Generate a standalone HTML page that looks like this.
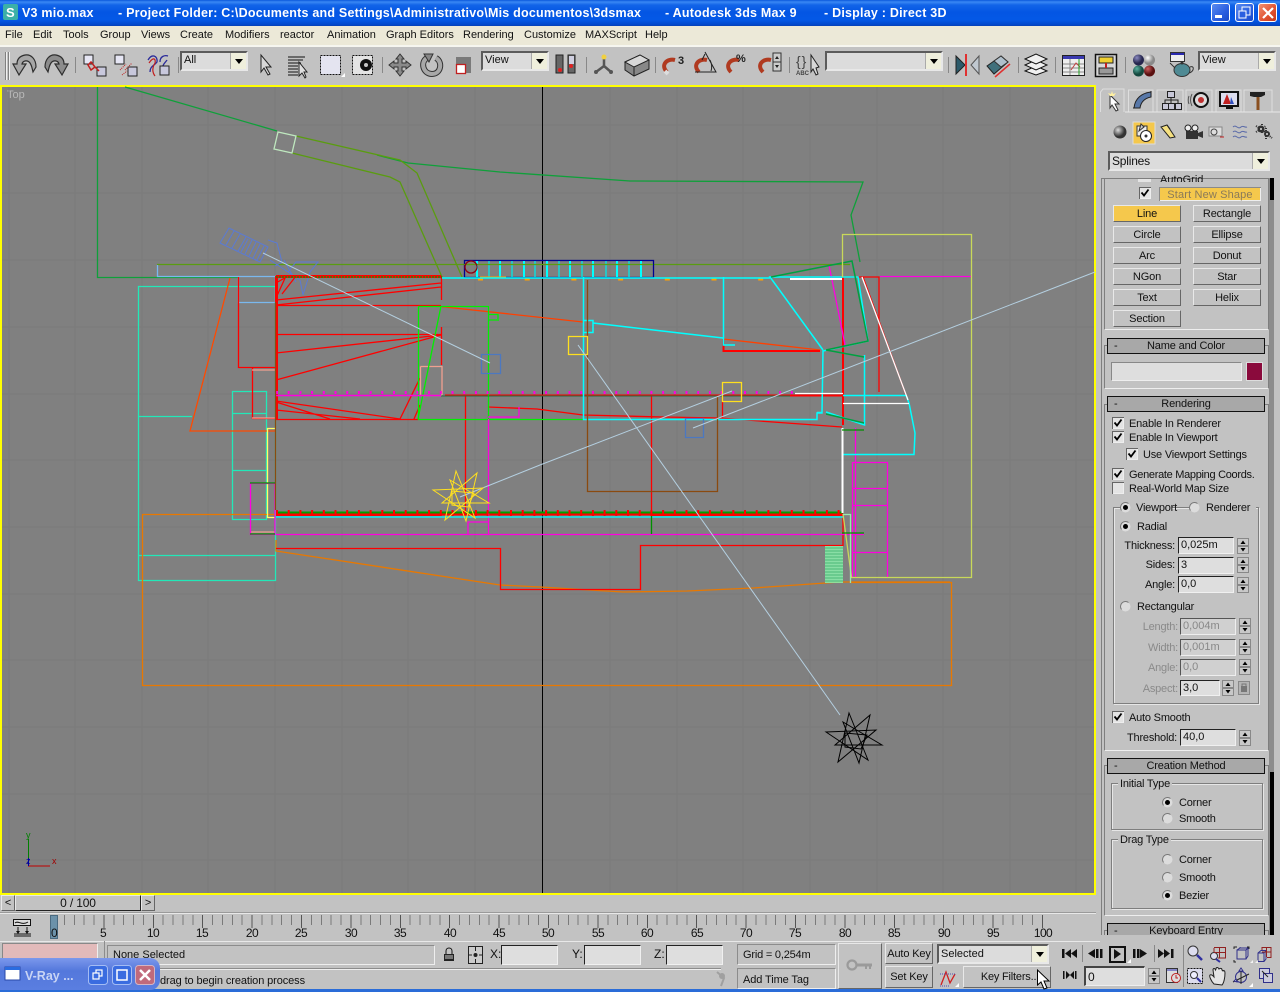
<!DOCTYPE html>
<html><head><meta charset="utf-8"><title>3ds Max</title>
<style>
html,body{margin:0;padding:0;width:1280px;height:992px;overflow:hidden;background:#c2c2c2}
body{position:relative;font:11px "Liberation Sans",sans-serif;color:#111}
.a{position:absolute}
.t{position:absolute;white-space:nowrap;line-height:13px;height:13px}
.r{position:absolute;white-space:nowrap;line-height:13px;text-align:right}
.c{position:absolute;white-space:nowrap;line-height:13px;text-align:center}
.p{margin-top:1px;letter-spacing:-.2px}
.d{color:#8a8a8a}
.tb{font-weight:bold;font-size:12.5px;color:#fff;letter-spacing:.22px;top:7px}
.b{position:absolute;box-sizing:border-box;background:#c2c2c2;border:1px solid;border-color:#e8e8e8 #666 #666 #e8e8e8;text-align:center;line-height:17px;white-space:nowrap;letter-spacing:-.15px}
.in{position:absolute;box-sizing:border-box;background:#dedede;border:1px solid;border-color:#222 #f0f0f0 #f0f0f0 #222;padding-left:2px;line-height:14px;white-space:nowrap}
.in.x{border-color:#555 #eee #eee #555;color:#888;background:#d0d0d0}
.box{position:absolute;box-sizing:border-box;border:1px solid;border-color:#8c8c8c #eee #eee #8c8c8c;white-space:nowrap}
.dd{position:absolute;box-sizing:border-box;background:#dcdcdc;border:2px solid;border-color:#5c5c5c #e8e8e8 #e8e8e8 #5c5c5c;white-space:nowrap;padding-left:2px;line-height:17px}
.dd:after{content:"";position:absolute;right:0;top:0;bottom:0;width:15px;background:#efefdc;border-left:1px solid #aaa}
.dd:before{content:"";position:absolute;right:3px;top:6px;z-index:2;border:4px solid transparent;border-top:5px solid #000;border-bottom:0}
.hd{position:absolute;box-sizing:border-box;left:1107px;width:158px;height:16px;background:#a8a8a8;border:1px solid #111;text-align:center;line-height:15px;white-space:nowrap;letter-spacing:-.15px}
.hd i{position:absolute;left:6px;top:0;font-style:normal}
.fr{position:absolute;box-sizing:border-box;border:1px solid #7e7e7e;box-shadow:1px 1px 0 #e6e6e6,inset 1px 1px 0 #e6e6e6}
.leg{position:absolute;background:#c2c2c2;padding:0 2px;line-height:13px;white-space:nowrap;margin-top:1px;letter-spacing:-.2px}
.y{background:#f5c84c}
.win{position:absolute;top:3px;width:19px;height:19px;box-sizing:border-box;border:1px solid #fff;border-radius:3px;background:linear-gradient(135deg,#5a8cf0,#2a5ee0 60%,#1a48c8)}
.lb{position:absolute;white-space:nowrap;line-height:13px;text-align:center;font-size:12px;width:20px;top:927px;letter-spacing:-.6px}
</style></head><body>

<!-- Title bar -->
<div class="a" style="left:0;top:0;width:1280px;height:26px;background:linear-gradient(#0a58dc 0,#3a88f4 2px,#1264e8 5px,#0456e4 12px,#0458e6 20px,#0346c8 25px,#0a40b0 26px)"></div>
<div class="t tb" style="left:22px">V3 mio.max</div>
<div class="t tb" style="left:118px">- Project Folder: C:\Documents and Settings\Administrativo\Mis documentos\3dsmax</div>
<div class="t tb" style="left:665px">- Autodesk 3ds Max 9</div>
<div class="t tb" style="left:824px">- Display : Direct 3D</div>
<div class="win" style="left:1211px"></div><div class="win" style="left:1235px"></div>
<div class="win" style="left:1258px;background:linear-gradient(135deg,#f09070,#e05030 60%,#c83818)"></div>

<!-- Menu -->
<div class="a" style="left:0;top:26px;width:1280px;height:19px;background:#ece9d8"></div>
<div class="a" style="left:0;top:45px;width:1280px;height:2px;background:#f6f6f0"></div>
<div class="t" style="left:5px;top:29px">File</div><div class="t" style="left:33px;top:29px">Edit</div><div class="t" style="left:63px;top:29px">Tools</div><div class="t" style="left:100px;top:29px">Group</div><div class="t" style="left:141px;top:29px">Views</div><div class="t" style="left:180px;top:29px">Create</div><div class="t" style="left:225px;top:29px">Modifiers</div><div class="t" style="left:280px;top:29px">reactor</div><div class="t" style="left:327px;top:29px">Animation</div><div class="t" style="left:386px;top:29px">Graph Editors</div><div class="t" style="left:463px;top:29px">Rendering</div><div class="t" style="left:524px;top:29px">Customize</div><div class="t" style="left:585px;top:29px">MAXScript</div><div class="t" style="left:645px;top:29px">Help</div>

<!-- Toolbar dropdowns -->
<div class="dd" style="left:180px;top:51px;width:68px;height:20px;line-height:15px">All</div>
<div class="dd" style="left:481px;top:51px;width:68px;height:20px;line-height:15px">View</div>
<div class="dd" style="left:825px;top:51px;width:118px;height:20px"></div>
<div class="dd" style="left:1198px;top:51px;width:78px;height:20px;line-height:15px">View</div>

<!-- Viewport -->
<div class="a" style="left:0;top:85px;width:1096px;height:810px;box-sizing:border-box;border:2px solid #ffff00;background:#808080"></div>
<div class="t" style="left:7px;top:89px;color:#b8b8b8">Top</div>

<svg class="a" style="left:0;top:0" width="1280" height="992" viewBox="0 0 1280 992" fill="none">
<defs>
<g id="star"><path d="M-27-5L23-7-15 25-4-24 15 23ZM17-22L6 26-10-15 29 8-18 8Z"/><path d="M-8-4L14-2 8 12-8 10Z"/></g>
</defs>
<!-- grid -->
<path shape-rendering="crispEdges" stroke="#7a7a7a" d="M9 87V893M75 87V893M142 87V893M208 87V893M275 87V893M342 87V893M408 87V893M475 87V893M610 87V893M677 87V893M743 87V893M810 87V893M877 87V893M943 87V893M1010 87V893M1076 87V893M2 125H1094M2 193H1094M2 260H1094M2 327H1094M2 394H1094M2 460H1094M2 527H1094M2 594H1094M2 660H1094M2 727H1094M2 794H1094M2 860H1094"/>
<g stroke-width="1.300">
<path stroke="#000" stroke-width="1" shape-rendering="crispEdges" d="M542.5 87V893"/>
<!-- green outlines -->
<path stroke="#0fa03a" d="M97.500 87V277.500H238M125 87L277 131M377 155L408 163 500 172 630 181 863 182 851 215 860 262"/>
<path stroke="#5a9c10" d="M296 136L400 160 417 173 462 277M292 153L390 177 400 182 442 277M157 264.500H470M653 264.500H850"/>
<path stroke="#bfe8bf" d="M278 132L296 136 292 153 274 149Z"/>
<!-- left turquoise -->
<path stroke="#22e8b8" d="M138.500 286.500H275.500V580.500H138.500ZM138 416.500H192M138 555.500H275M232.500 391.500H266.500V519.500H232.500ZM232 413.500H266M232 470.500H266"/>
<path stroke="#7ab8ee" d="M157.500 265V276.500H275.500M238.500 276.500V302.500H275.500V276"/>
<path stroke="#ff4a00" d="M230 278L190 431H275"/>
<path stroke="#e87800" d="M275 514.500H142.500V685.500H951.500V582.500H850M276 540V551L500 585 540 587 623 592 687 591 753 588 840 582 950 582"/>
<!-- blue object -->
<path stroke="#5a7ad4" stroke-width="1" d="M229 228L220 243 260 262 268 247ZM234 231L226 245M240 234L232 248M246 237L238 251M248 239L241 252M252 240L245 254M256 242L249 256M260 244L253 258M264 246L257 260M268 240L277 243 282 262 275 266M270 260L300 280 303 295 310 272 318 262 296 262 288 272M284 260L296 282"/>
<!-- red main -->
<g stroke="#ff0000">
<path stroke-width="3" d="M276 276.500H441M276.500 276V419"/>
<path d="M238.500 277V367.500H275M252.500 367.500V418.500H276M276.500 305.500H441M276.500 334.500H441M276 353L441 335M276 380L441 335M441.500 276V300M441.500 327V365M276 300L441 283M276 305L441 287M276 298L286 276M282 294L296 276M276 401L400 419M276 410L360 419M276 402L330 419M276 419.500H418M400 419L420 378M414 419L420 405M276 283L288 276"/>
<path d="M442 307L445 307 583 322M723 339L820 350" stroke="#ff4000"/>
<path stroke-width="2" d="M723.500 339V351H820M445 395.500H843M276 514.500H843M843 277V425"/>
<path d="M276 548.500H500.500V589.500H640.500V545.500H843V514M465.500 396V514M651.500 396V514M722.500 396V419M488 407L537 409 583 415 663 417 720 418 773 422 842 427M842.500 277H879V392M863 277L906 395"/>
</g>
<!-- pink etc -->
<path stroke="#f0a090" d="M420.500 366.500H442V395M420.500 366.500V395.500H442M252 370H275M252 418H275M250 532H275"/>
<path stroke="#ffff66" d="M275 428.500H267.500V517.500H275"/>
<path stroke="#00f000" d="M418.500 306.500H488.500V419M418.500 306.500V419.500H583M441 306L418 419M488.500 314.500H498V321M488 320H497"/>
<!-- magenta -->
<g stroke="#ff00e0">
<path d="M488.500 419V534M276 534.500H864M468 534V522H488M250.500 483.500H275V534.500H250.500ZM488 417H519V407M880 276.500H971M852.500 462.500H887.500V577M855.500 428V577M852 488.500H887M852 505.500H887M852 552.500H887M852.500 462V577M829 265L845 345"/>
<path stroke-width="1.500" d="M276 395.500H441"/>
<path stroke-width="3" stroke-dasharray="2 9.700" d="M276 392.500H800"/>
</g>
<!-- band y514 -->
<path stroke="#00a000" stroke-width="2" d="M276 512.500H843"/>
<path stroke="#ff0000" stroke-width="6" stroke-dasharray="2 9.700" d="M276 513H843"/>
<path stroke="#00ffff" d="M276 517H843"/>
<path stroke="#ff0000" stroke-width="2" d="M276 515H440M651 515H843"/>
<path stroke="#009000" d="M651.500 516V534M250 483H275M250 534H275"/>
<path stroke="#2a6a40" stroke-width="1" d="M441 396H790"/>
<!-- blue strip -->
<path stroke="#ffa000" stroke-width="2" stroke-dasharray="5 41.700" d="M478 279.500H780"/>
<rect x="464.500" y="260.500" width="189" height="17" stroke="#000090"/>
<path stroke="#00ffff" stroke-width="2" d="M477 261V277M500 261V277M524 261V277M547 261V277M570 261V277M593 261V277M617 261V277M641 261V277"/>
<path stroke="#00e8e8" d="M489 261V277M512 261V277M535 261V277M559 261V277M582 261V277M606 261V277M629 261V277"/>
<path stroke="#5a9c10" d="M464 264.500H653"/>
<path stroke="#ffa000" stroke-width="2" d="M480 277.500H506"/>
<path stroke="#00a000" stroke-dasharray="2 1" d="M276 277H442"/>
<path stroke="#00ffff" stroke-width="1.500" d="M442 278H770M583.500 277V419.500H817V413H822L823 351 868 341 858 277 770 277 823 350M723.500 277V345H735M583 320.500H593V332.500H583M593 323L723 338M864.500 355V425L826 412M817 412.500H822M843 395.500H906M909 403L915 433 914 454.500H843M906 395L909 403"/>
<path stroke="#00a040" stroke-width="1.500" d="M771 277L852 261 868 341 826 350 864 357M826 414L864 423"/>
<path stroke="#ffffff" stroke-width="2" d="M842.500 428V513M842 279H790"/>
<path stroke="#ffffff" d="M862 277L908 400M843 403.500H909M795 393.500H843"/>
<!-- yellow rect -->
<path stroke="#c8d85a" d="M842.500 277V234.500H971.500V577.500H851.500L843 514"/>
<path stroke="#9ae8b0" d="M843 514.500H850.500V583"/>
<path stroke="#009000" d="M842 533H864M842 430H864"/>
<!-- brown -->
<path stroke="#8a4a10" d="M587.500 280V491.500H717.500V396M275.500 302V510"/>
<!-- stair -->
<rect x="825" y="546" width="18" height="37" fill="#8ae8a8" opacity=".9"/>
<path stroke="#4ab878" stroke-width="1" d="M825 548H843M825 551H843M825 554H843M825 557H843M825 560H843M825 563H843M825 566H843M825 569H843M825 572H843M825 575H843M825 578H843M825 581H843"/>
<!-- squares -->
<path stroke="#ffe01e" d="M568.500 336.500H587.500V354.500H568.500ZM722.500 382.500H741.500V401.500H722.500Z"/>
<path stroke="#4c78c0" d="M481.500 354.500H500.500V373.500H481.500ZM685.500 418.500H703.500V437.500H685.500Z"/>
<circle cx="471" cy="267" r="6" stroke="#900010"/>
</g>
<!-- light lines -->
<g stroke="#b4cfe0" >
<path d="M263 253L490 363M1095 272L693 428M732 391L540 465 460 497M578 345L840 715"/>
</g>
<use href="#star" transform="translate(460 495)" stroke="#ffe01e"/>
<use href="#star" transform="translate(853 737)" stroke="#000"/>
<!-- axis tripod -->
<path stroke="#008000" d="M28.500 866V839"/><path stroke="#c00000" d="M28 866H50"/><path stroke="#0000a0" d="M28.500 866V858"/>
<text x="26" y="838" font-size="9" fill="#008000" font-family="Liberation Sans">y</text>
<text x="52" y="864" font-size="9" fill="#a00000" font-family="Liberation Sans">x</text>
<text x="26" y="864" font-size="9" fill="#0000a0" font-family="Liberation Sans">z</text>

<!-- Toolbar grip & separators -->
<path stroke="#808080" d="M5.500 52V80M8.500 52V80"/>
<path stroke="#f0f0f0" d="M6.500 52V80M9.500 52V80"/>
<path stroke="#888" d="M75.500 57V73M178.500 57V73M382.500 57V73M586.500 57V73M655.500 57V73M789.500 57V73M948.500 57V73M1018.500 57V73M1055.500 57V73M1125.500 57V73"/>
<!-- undo / redo -->
<path id="u" fill="#a6a6a6" stroke="#2e2e2e" stroke-width="1.200" d="M13 64L19 75 26 64 22 64C23 60 28 60 30 63 32 66 32 68 33 72L36 67C36 59 31 54 25 55 20 56 17 59 17 64Z"/>
<path fill="#8c8c8c" stroke="#2e2e2e" stroke-width="1.200" transform="translate(81 0) scale(-1 1)" d="M13 64L19 75 26 64 22 64C23 60 28 60 30 63 32 66 32 68 33 72L36 67C36 59 31 54 25 55 20 56 17 59 17 64Z"/>
<!-- link -->
<g stroke="#222"><rect x="84" y="55" width="9" height="9" fill="#e6e6f4"/><rect x="97" y="67" width="9" height="9" fill="#c8c8dc"/></g>
<path stroke="#c02020" stroke-width="1.500" d="M91 62L95 67 91 70 88 65ZM94 66L99 71"/>
<g stroke="#222"><rect x="115" y="55" width="9" height="9" fill="#e6e6f4"/><rect x="128" y="67" width="9" height="9" fill="#c8c8dc"/></g>
<path stroke="#c02020" stroke-dasharray="1 1" d="M120 70L126 64M125 70L132 63M122 75L127 71"/>
<path stroke="#2a2a9a" stroke-width="1.300" d="M148 60C152 53 158 56 157 62 154 66 150 66 150 72M160 62C160 56 165 55 168 56M162 70C162 64 166 62 167 60"/>
<path stroke="#c02020" stroke-width="1.200" d="M149 63C153 57 156 58 155 63 152 68 152 72 155 76"/>
<rect x="160" y="66" width="9" height="9" stroke="#222" fill="#c8c8dc"/>
<!-- select arrow -->
<path fill="#d8d8d8" stroke="#222" d="M261 55V72L264 68 268 75 270 74 266 67 271 67Z"/>
<!-- select by name -->
<path stroke="#111" d="M288 57H305M288 60H303M288 63H301M288 66H298M288 69H298M288 72H298M288 75H298"/>
<path fill="#e0e0e0" stroke="#222" d="M299 62V76L302 73 305 78 306 77 304 72 307 72Z"/>
<!-- rect region -->
<rect x="320.500" y="55.500" width="20" height="19" fill="#e4e4f0" stroke="#111" stroke-dasharray="2 1"/>
<path fill="#fff" d="M341 77h4v-4z"/>
<!-- window/crossing -->
<rect x="352.500" y="55.500" width="20" height="19" fill="#e4e4e4" stroke="#111" stroke-dasharray="2 1"/>
<circle cx="366" cy="65" r="6" fill="#111"/><circle cx="366" cy="65" r="2" fill="#c8c8c8"/>
<!-- move -->
<path fill="#8a8a8a" stroke="#333" d="M400 54L404 59 402 59 402 63 406 63 406 61 411 65 406 69 406 67 402 67 402 71 404 71 400 76 396 71 398 71 398 67 394 67 394 69 389 65 394 61 394 63 398 63 398 59 396 59Z"/>
<!-- rotate -->
<path fill="none" stroke="#333" stroke-width="6" d="M427 58C420 62 423 74 432 74 441 74 443 62 436 58"/>
<path fill="none" stroke="#a8a8a8" stroke-width="4" d="M427 58C420 62 423 74 432 74 441 74 443 62 436 58"/>
<path fill="#888" stroke="#333" d="M424 54L433 54 429 62Z"/>
<!-- scale -->
<rect x="456" y="57" width="15" height="16" fill="#7a7a7a"/>
<rect x="456.500" y="64.500" width="9" height="9" fill="#fff" stroke="#c02020" stroke-width="1.300"/>
<!-- pivot -->
<path fill="#666" stroke="#222" d="M556 55h7v18h-7zM568 55h7v18h-7z" />
<path fill="#cfcfe0" d="M569 56h5v8h-5z"/>
<circle cx="560" cy="70" r="2" fill="#e02020"/><circle cx="571" cy="66" r="2" fill="#e02020"/>
<!-- axis -->
<path stroke="#555" stroke-width="2.500" d="M604 66V58M604 66L596 72M604 66L611 72"/>
<circle cx="604" cy="57" r="2.500" fill="#f0d040"/><circle cx="596" cy="72" r="2" fill="#555"/><circle cx="611" cy="72" r="2" fill="#555"/>
<!-- box -->
<path fill="#888" stroke="#222" d="M625 62L640 55 649 60 649 69 634 76 625 70Z"/><path fill="#d8d8d8" stroke="#222" d="M625 62L640 55 649 60 634 67Z"/><path stroke="#222" d="M634 67V76"/>
<!-- snaps -->
<g id="mag1"><path stroke="#b03a20" stroke-width="4" d="M667 72C660 65 667 58 675 60"/><path stroke="#ddd" stroke-width="4" d="M665 71L668 74"/></g>
<text x="678" y="64" font-size="11" font-weight="bold" fill="#222" font-family="Liberation Sans">3</text>
<path stroke="#b03a20" stroke-width="4" d="M699 72C692 65 699 58 707 60"/><path stroke="#222" d="M705 52L716 72H695M705 54L702 60M710 60C712 64 712 68 711 71"/>
<path stroke="#b03a20" stroke-width="4" d="M731 72C724 65 731 58 739 60"/>
<text x="736" y="62" font-size="11" font-weight="bold" fill="#222" font-family="Liberation Sans">%</text>
<path stroke="#b03a20" stroke-width="4" d="M763 72C756 65 763 58 771 60"/>
<rect x="773" y="53" width="8" height="9" fill="#ccc" stroke="#333"/><rect x="773" y="62" width="8" height="9" fill="#ccc" stroke="#333"/>
<path fill="#222" d="M775 59l2-3 2 3zM775 65l2 3 2-3z"/>
<!-- abc -->
<text x="796" y="66" font-size="14" fill="#444" font-family="Liberation Sans" letter-spacing="1">{}</text>
<text x="796" y="75" font-size="6" font-weight="bold" fill="#444" font-family="Liberation Sans">ABC</text>
<path fill="#d8d8d8" stroke="#222" d="M811 55V72L813 69 816 75 818 74 816 68 819 67Z"/>
<!-- mirror -->
<path fill="#2c5a6a" stroke="#222" d="M956 56V74L965 65Z"/><path fill="#c0c8d0" stroke="#555" d="M971 65L979 56V74Z"/><path stroke="#e03030" stroke-width="2" d="M966 54V76"/>
<!-- align -->
<path fill="#40707c" stroke="#222" d="M987 66L1001 56 1008 62 994 74Z"/><path fill="#b0c0cc" stroke="#333" d="M994 61L1001 56 1008 62 1001 67Z"/><path stroke="#e03030" stroke-width="1.500" d="M995 77L1010 64"/>
<!-- layers -->
<g fill="#f0f0f0" stroke="#111"><path d="M1025 71L1036 66 1047 71 1036 75Z"/><path d="M1025 65L1036 60 1047 65 1036 70Z"/><path d="M1025 59L1036 54 1047 59 1036 64Z"/></g>
<!-- curve editor -->
<rect x="1062.500" y="55.500" width="22" height="20" fill="#eee" stroke="#222"/><rect x="1063" y="56" width="21" height="3" fill="#3a3ab0"/>
<path stroke="#888" d="M1070 59V75M1063 64H1084M1063 68H1084M1063 72H1084"/><path stroke="#c04040" d="M1071 70L1076 63 1080 67"/><path stroke="#20a020" d="M1079 59V75"/>
<!-- schematic -->
<rect x="1095.500" y="54.500" width="21" height="22" fill="#d8d8d8" stroke="#111" stroke-width="1.500"/><rect x="1099" y="57" width="14" height="6" fill="#f0d030" stroke="#222"/><rect x="1099" y="68" width="14" height="6" fill="#999" stroke="#222"/><path stroke="#c02020" stroke-width="2" d="M1106 63V68"/>
<!-- material -->
<defs>
<radialGradient id="m1" cx=".35" cy=".3"><stop offset="0" stop-color="#8a8ac0"/><stop offset="1" stop-color="#26264e"/></radialGradient>
<radialGradient id="m2" cx=".35" cy=".3"><stop offset="0" stop-color="#fff"/><stop offset="1" stop-color="#8a8a8a"/></radialGradient>
<radialGradient id="m3" cx=".35" cy=".3"><stop offset="0" stop-color="#5ab0a0"/><stop offset="1" stop-color="#14483e"/></radialGradient>
<radialGradient id="m4" cx=".35" cy=".3"><stop offset="0" stop-color="#d06060"/><stop offset="1" stop-color="#5a1010"/></radialGradient>
</defs>
<circle cx="1138.500" cy="60" r="5.500" fill="url(#m1)"/><circle cx="1149.500" cy="60" r="5.500" fill="url(#m2)"/><circle cx="1138.500" cy="71" r="5.500" fill="url(#m3)"/><circle cx="1149.500" cy="71" r="5.500" fill="url(#m4)"/>
<!-- teapot -->
<rect x="1170.500" y="52.500" width="14" height="9" fill="#eee" stroke="#333"/><rect x="1171" y="53" width="13" height="2" fill="#2a2ab0"/>
<ellipse cx="1182" cy="70" rx="8" ry="6.500" fill="#4f8a94" stroke="#333"/><path stroke="#333" d="M1175 68L1170 63M1190 67C1195 65 1194 72 1189 73"/><circle cx="1182" cy="63" r="1.500" fill="#333"/>

<!-- command tabs -->
<path fill="#c2c2c2" stroke="#dedede" d="M1100.500 112V92L1103 89H1124V112M1128.500 112V90H1153V112M1157 112V90H1183V112M1186 112V90H1212V112M1216 112V90H1241V112M1244 112V90H1272V112"/>
<path stroke="#e8e8e8" d="M1125 112H1280"/>
<path fill="#fff" stroke="#333" d="M1110 95V108L1112 105 1116 111 1118 110 1115 104 1119 104Z"/><path fill="#fff0a0" d="M1108 93l3 1 1-3 1 3 3-1-2 3-4 0z"/>
<path fill="#5878a8" stroke="#222" d="M1134 108C1135 98 1142 93 1151 92L1151 97C1146 98 1141 101 1140 108Z"/><path stroke="#222" d="M1133 108H1135M1151 91V93"/>
<rect x="1167.500" y="91.500" width="7" height="6" fill="#c8c8d8" stroke="#222"/><rect x="1162.500" y="103.500" width="6" height="6" fill="#c8c8d8" stroke="#222"/><rect x="1168.500" y="103.500" width="6" height="6" fill="#c8c8d8" stroke="#222"/><rect x="1175.500" y="103.500" width="6" height="6" fill="#c8c8d8" stroke="#222"/><path stroke="#222" d="M1171 98V103M1165 103V100H1178V103"/>
<circle cx="1201" cy="100" r="7" fill="#ddd" stroke="#111" stroke-width="2"/><circle cx="1201" cy="100" r="3" fill="#c03030"/><path stroke="#555" d="M1192 94C1190 98 1190 102 1192 106M1189 96C1188 98 1188 102 1189 104"/>
<rect x="1220" y="92" width="18" height="14" fill="#dde" stroke="#111" stroke-width="2"/><path fill="#c02020" d="M1227 94l4 10h-8z"/><path fill="#3050c0" d="M1231 97l3 7h-4z"/><path stroke="#111" stroke-width="2" d="M1226 108H1233"/>
<path stroke="#8a5020" stroke-width="3" d="M1258 96V110"/><path fill="#222" d="M1250 92H1265L1265 95 1261 97H1254L1250 96Z"/>
<!-- sub icons -->
<rect x="1133" y="122" width="22" height="22" fill="#f5c84c" stroke="#ddd"/>
<defs><radialGradient id="sp" cx=".35" cy=".35"><stop offset="0" stop-color="#ddd"/><stop offset="1" stop-color="#333"/></radialGradient></defs>
<circle cx="1120" cy="132" r="6.500" fill="url(#sp)"/>
<rect x="1137" y="126" width="10" height="10" fill="#eee" stroke="#333"/><circle cx="1146" cy="136" r="5.500" fill="#fff" stroke="#222"/><circle cx="1146" cy="136" r="1.500" fill="#333"/><path fill="#ccc" stroke="#333" d="M1141 124l3 3-5 4z"/>
<path fill="#f5e080" stroke="#222" d="M1161 127L1167 125 1175 137 1170 138Z"/><path stroke="#222" d="M1167 125L1170 129"/>
<rect x="1186" y="131" width="12" height="8" fill="#333"/><circle cx="1188" cy="128" r="3" stroke="#222" fill="#eee"/><circle cx="1195" cy="128" r="3" stroke="#222" fill="#eee"/><path fill="#333" d="M1198 133l5-2v7l-5-2z"/>
<rect x="1209" y="127" width="13" height="9" fill="#ddd" stroke="#888"/><circle cx="1214" cy="132" r="3" stroke="#444"/><path stroke="#c02020" d="M1220 137H1224"/>
<path stroke="#5a6aa8" d="M1233 127C1236 124 1238 130 1241 127 1243 125 1245 128 1247 127M1233 132C1236 129 1238 135 1241 132 1243 130 1245 133 1247 132M1233 137C1236 134 1238 140 1241 137 1243 135 1245 138 1247 137"/>
<g fill="#333"><circle cx="1261" cy="129" r="3.500"/><circle cx="1267" cy="134" r="3"/></g><path stroke="#333" stroke-dasharray="1 1" stroke-width="2" d="M1256 126L1266 132M1262 124V134M1256 132L1266 126M1262 130L1272 138M1266 128V140"/><circle cx="1261" cy="129" r="1" fill="#ddd"/><circle cx="1267" cy="134" r="1" fill="#ddd"/>
</svg>

<!-- Panel dropdown -->
<div class="dd" style="left:1108px;top:151px;width:162px;height:20px;font-size:12px;letter-spacing:-.2px">Splines</div>

<!-- Rollout frame lines -->
<div class="a" style="left:1101px;top:178px;width:1px;height:757px;background:#7e7e7e"></div>
<div class="a" style="left:1104px;top:178px;width:165px;height:152px;box-sizing:border-box;border:1px solid #7e7e7e;border-top:0;border-bottom-color:#eee"></div>
<div class="a" style="left:1269px;top:178px;width:5px;height:757px;background:#8c8c8c"></div>
<div class="a" style="left:1270px;top:178px;width:4px;height:22px;background:#000"></div>
<div class="a" style="left:1270px;top:772px;width:4px;height:163px;background:#000"></div>
<div class="a" style="left:1101px;top:178px;width:168px;height:1px;background:#7e7e7e"></div>

<div class="t" style="left:1160px;top:174px;height:8px;overflow:hidden;line-height:13px">AutoGrid</div>
<div class="a y" style="left:1159px;top:187px;width:102px;height:14px;box-shadow:inset 1px 1px 0 #8a8a8a,inset -1px -1px 0 #eee"></div>
<div class="c" style="left:1159px;top:189px;width:102px;color:#8a7a5a;letter-spacing:.15px">Start New Shape</div>

<div class="b y" style="left:1113px;top:205px;width:68px;height:17px">Line</div><div class="b" style="left:1193px;top:205px;width:68px;height:17px">Rectangle</div>
<div class="b" style="left:1113px;top:226px;width:68px;height:17px">Circle</div><div class="b" style="left:1193px;top:226px;width:68px;height:17px">Ellipse</div>
<div class="b" style="left:1113px;top:247px;width:68px;height:17px">Arc</div><div class="b" style="left:1193px;top:247px;width:68px;height:17px">Donut</div>
<div class="b" style="left:1113px;top:268px;width:68px;height:17px">NGon</div><div class="b" style="left:1193px;top:268px;width:68px;height:17px">Star</div>
<div class="b" style="left:1113px;top:289px;width:68px;height:17px">Text</div><div class="b" style="left:1193px;top:289px;width:68px;height:17px">Helix</div>
<div class="b" style="left:1113px;top:310px;width:68px;height:17px">Section</div>

<!-- Name and color -->
<div class="a" style="left:1104px;top:345px;width:165px;height:44px;box-sizing:border-box;border:1px solid #7e7e7e;border-top-color:#7e7e7e;border-bottom-color:#eee"></div>
<div class="hd" style="top:338px"><i>-</i>Name and Color</div>
<div class="in" style="left:1111px;top:362px;width:131px;height:19px;border-color:#888 #eee #eee #888"></div>
<div class="a" style="left:1246px;top:362px;width:17px;height:19px;background:#8a0a3c;box-sizing:border-box;border:1px solid #ddd"></div>

<!-- Rendering -->
<div class="a" style="left:1104px;top:404px;width:165px;height:347px;box-sizing:border-box;border:1px solid #7e7e7e;border-bottom-color:#eee"></div>
<div class="hd" style="top:396px"><i>-</i>Rendering</div>
<div class="t p" style="left:1129px;top:417px">Enable In Renderer</div>
<div class="t p" style="left:1129px;top:431px">Enable In Viewport</div>
<div class="t p" style="left:1143px;top:448px">Use Viewport Settings</div>
<div class="t p" style="left:1129px;top:468px;letter-spacing:-.3px">Generate Mapping Coords.</div>
<div class="t p" style="left:1129px;top:482px">Real-World Map Size</div>

<div class="fr" style="left:1113px;top:507px;width:146px;height:197px"></div>
<div class="leg" style="left:1122px;top:501px;width:46px">&nbsp;</div><div class="leg" style="left:1190px;top:501px;width:62px">&nbsp;</div>
<div class="t p" style="left:1136px;top:501px">Viewport</div><div class="t p" style="left:1206px;top:501px">Renderer</div>
<div class="t p" style="left:1137px;top:520px">Radial</div>
<div class="r p" style="left:1100px;top:539px;width:75px">Thickness:</div><div class="in" style="left:1178px;top:537px;width:56px;height:17px">0,025m</div>
<div class="r p" style="left:1100px;top:558px;width:75px">Sides:</div><div class="in" style="left:1178px;top:557px;width:56px;height:17px">3</div>
<div class="r p" style="left:1100px;top:578px;width:75px">Angle:</div><div class="in" style="left:1178px;top:576px;width:56px;height:17px">0,0</div>
<div class="t p" style="left:1137px;top:600px">Rectangular</div>
<div class="r d p" style="left:1100px;top:620px;width:78px">Length:</div><div class="in x" style="left:1180px;top:618px;width:56px;height:17px">0,004m</div>
<div class="r d p" style="left:1100px;top:641px;width:78px">Width:</div><div class="in x" style="left:1180px;top:639px;width:56px;height:17px">0,001m</div>
<div class="r d p" style="left:1100px;top:661px;width:78px">Angle:</div><div class="in x" style="left:1180px;top:659px;width:56px;height:17px">0,0</div>
<div class="r d p" style="left:1100px;top:682px;width:78px">Aspect:</div><div class="in" style="left:1180px;top:680px;width:40px;height:16px">3,0</div>
<div class="t p" style="left:1129px;top:711px">Auto Smooth</div>
<div class="r p" style="left:1100px;top:731px;width:77px">Threshold:</div><div class="in" style="left:1180px;top:729px;width:56px;height:17px">40,0</div>

<!-- Creation method -->
<div class="a" style="left:1104px;top:765px;width:165px;height:151px;box-sizing:border-box;border:1px solid #7e7e7e;border-bottom-color:#eee"></div>
<div class="hd" style="top:758px"><i>-</i>Creation Method</div>
<div class="fr" style="left:1111px;top:783px;width:152px;height:47px"></div><div class="leg" style="left:1118px;top:777px">Initial Type</div>
<div class="t p" style="left:1179px;top:796px">Corner</div><div class="t p" style="left:1179px;top:812px">Smooth</div>
<div class="fr" style="left:1111px;top:839px;width:152px;height:70px"></div><div class="leg" style="left:1118px;top:833px">Drag Type</div>
<div class="t p" style="left:1179px;top:853px">Corner</div><div class="t p" style="left:1179px;top:871px">Smooth</div><div class="t p" style="left:1179px;top:889px">Bezier</div>
<div class="a" style="left:1104px;top:930px;width:165px;height:5px;box-sizing:border-box;border:1px solid #7e7e7e;border-bottom:0"></div>
<div class="a" style="left:1107px;top:923px;width:158px;height:12px;overflow:hidden;box-sizing:border-box;background:#a8a8a8;border:1px solid #111;border-bottom:0;text-align:center;line-height:14px;letter-spacing:-.15px">Keyboard Entry<span class="a" style="left:6px;top:0">-</span></div>
<div class="a" style="left:1096px;top:935px;width:184px;height:7px;background:#c2c2c2"></div>

<!-- Time slider -->
<div class="b" style="left:1px;top:895px;width:14px;height:16px;line-height:14px">&lt;</div>
<div class="b" style="left:15px;top:895px;width:126px;height:16px;border-bottom-color:#222;border-right-color:#222;line-height:15px;font-size:12px">0 / 100</div>
<div class="b" style="left:141px;top:895px;width:14px;height:16px;line-height:14px">&gt;</div>
<div class="a" style="left:0;top:913px;width:1096px;height:1px;background:#e8e8e8"></div>
<div class="a" style="left:0;top:912px;width:1096px;height:1px;background:#9a9a9a"></div>

<!-- Ruler -->
<div class="a" style="left:54px;top:915px;width:989px;height:10px;background:repeating-linear-gradient(90deg,#7a7a7a 0 1px,transparent 1px 9.88px)"></div>
<div class="a" style="left:54px;top:915px;width:989px;height:13px;background:repeating-linear-gradient(90deg,#555 0 1px,transparent 1px 49.4px)"></div>
<div class="a" style="left:50px;top:915px;width:8px;height:24px;background:#6c92aa;box-sizing:border-box;border:1px solid #4a6a80"></div>
<div class="lb" style="left:44px">0</div>
<div class="lb" style="left:93px">5</div><div class="lb" style="left:143px">10</div><div class="lb" style="left:192px">15</div><div class="lb" style="left:242px">20</div><div class="lb" style="left:291px">25</div><div class="lb" style="left:341px">30</div><div class="lb" style="left:390px">35</div><div class="lb" style="left:440px">40</div><div class="lb" style="left:489px">45</div><div class="lb" style="left:538px">50</div><div class="lb" style="left:588px">55</div><div class="lb" style="left:637px">60</div><div class="lb" style="left:687px">65</div><div class="lb" style="left:736px">70</div><div class="lb" style="left:785px">75</div><div class="lb" style="left:835px">80</div><div class="lb" style="left:884px">85</div><div class="lb" style="left:934px">90</div><div class="lb" style="left:983px">95</div><div class="lb" style="left:1032px;width:22px">100</div>

<!-- Status -->
<div class="a" style="left:0;top:941px;width:1100px;height:1px;background:#e8e8e8"></div>
<div class="a" style="left:2px;top:943px;width:96px;height:22px;background:#e2baba;box-sizing:border-box;border:1px solid;border-color:#888 #eee #eee #888"></div>
<div class="a" style="left:104px;top:941px;width:1px;height:49px;background:#8c8c8c"></div>
<div class="box" style="left:107px;top:945px;width:328px;height:20px;padding-left:5px;line-height:19px">None Selected</div>
<div class="a" style="left:107px;top:968px;width:614px;height:1px;background:#8c8c8c"></div><div class="a" style="left:107px;top:969px;width:614px;height:1px;background:#eee"></div>
<div class="t" style="left:160px;top:975px;letter-spacing:-.1px">drag to begin creation process</div>
<div class="t" style="left:490px;top:948px;font-size:12px">X:</div><div class="in" style="left:501px;top:945px;width:57px;height:20px"></div>
<div class="t" style="left:572px;top:948px;font-size:12px">Y:</div><div class="in" style="left:584px;top:945px;width:57px;height:20px"></div>
<div class="t" style="left:654px;top:948px;font-size:12px">Z:</div><div class="in" style="left:666px;top:945px;width:57px;height:20px"></div>
<div class="box" style="left:737px;top:944px;width:99px;height:21px;padding-left:5px;line-height:20px;letter-spacing:-.2px">Grid = 0,254m</div>
<div class="box" style="left:737px;top:968px;width:99px;height:21px;padding-left:5px;line-height:22px;letter-spacing:-.1px">Add Time Tag</div>
<div class="b" style="left:838px;top:943px;width:44px;height:46px"></div>
<div class="b" style="left:885px;top:943px;width:48px;height:21px;line-height:20px;padding:0">Auto Key</div>
<div class="b" style="left:885px;top:966px;width:48px;height:22px;line-height:20px">Set Key</div>
<div class="dd" style="left:937px;top:944px;width:112px;height:20px;line-height:16px">Selected</div>
<div class="b" style="left:963px;top:966px;width:88px;height:22px;line-height:20px;letter-spacing:-.2px;padding-left:6px">Key Filters...</div>
<div class="in" style="left:1084px;top:966px;width:61px;height:20px;line-height:18px;font-size:12px;border-width:2px 1px 1px 2px;border-color:#444 #eee #eee #444">0</div>

<!-- Taskbar strip -->
<div class="a" style="left:0;top:989px;width:1280px;height:3px;background:#2a6cd8"></div>

<!-- V-Ray bubble -->
<div class="a" style="left:0;top:958px;width:160px;height:32px;border-radius:0 10px 10px 0;background:linear-gradient(#7c98ec,#5478dc 40%,#5a7ee0)"></div>
<div class="t" style="left:25px;top:970px;font-weight:bold;font-size:12.500px;color:#c8d4f4">V-Ray ...</div>

<!-- Overlay 2: checkboxes, radios, spinners, status icons -->
<svg class="a" style="left:0;top:0;pointer-events:none" width="1280" height="992" viewBox="0 0 1280 992" fill="none">
<defs>
<g id="cb"><rect x=".5" y=".5" width="11" height="11" fill="#e4e4e4" stroke="#eee"/><path stroke="#666" d="M.5 12V.5H12"/></g>
<g id="ck"><use href="#cb"/><path stroke="#000" stroke-width="1.800" d="M2.500 5.500L5 8.500 9.500 2.500"/></g>
<g id="ra"><circle cx="5.500" cy="5.500" r="5" fill="#dcdcdc"/><path stroke="#777" stroke-width="1" d="M1.500 8.500A5 5 0 0 1 8.500 1.500"/></g>
<g id="rb"><use href="#ra"/><circle cx="5.500" cy="5.500" r="2.500" fill="#000"/></g>
<g id="sp2"><rect x=".5" y=".5" width="11" height="7" fill="#c8c8c8" stroke="#888"/><rect x=".5" y="8.500" width="11" height="7" fill="#c8c8c8" stroke="#888"/><path fill="#000" d="M3.500 6l2.500-3.500L8.500 6zM3.500 10L6 13.500 8.500 10z"/></g>
</defs>
<rect x="1138" y="179" width="13" height="3" fill="#e4e4e4"/>
<use href="#ck" transform="translate(1139 187)"/>
<use href="#ck" transform="translate(1112 417)"/>
<use href="#ck" transform="translate(1112 431)"/>
<use href="#ck" transform="translate(1126 448)"/>
<use href="#ck" transform="translate(1112 468)"/>
<use href="#cb" transform="translate(1112 482)"/>
<use href="#ck" transform="translate(1112 711)"/>
<use href="#rb" transform="translate(1120 502)"/>
<use href="#ra" transform="translate(1189 502)"/>
<use href="#rb" transform="translate(1120 521)"/>
<use href="#ra" transform="translate(1120 601)"/>
<use href="#rb" transform="translate(1162 797)"/>
<use href="#ra" transform="translate(1162 813)"/>
<use href="#ra" transform="translate(1162 854)"/>
<use href="#ra" transform="translate(1162 872)"/>
<use href="#rb" transform="translate(1162 890)"/>
<use href="#sp2" transform="translate(1237 538)"/>
<use href="#sp2" transform="translate(1237 557)"/>
<use href="#sp2" transform="translate(1237 577)"/>
<use href="#sp2" transform="translate(1239 618)"/>
<use href="#sp2" transform="translate(1239 639)"/>
<use href="#sp2" transform="translate(1239 659)"/>
<use href="#sp2" transform="translate(1222 680)"/>
<use href="#sp2" transform="translate(1239 730)"/>
<rect x="1238.500" y="681.500" width="11" height="13" fill="#b4b4b4" stroke="#888"/><rect x="1241" y="686" width="6" height="6" fill="#777"/><path stroke="#777" d="M1242 686V684H1246V686"/>
<!-- mini curve -->
<rect x="13.500" y="919.500" width="17" height="6" fill="#ddd" stroke="#111"/><path stroke="#111" d="M15 923C18 920 22 926 28 922M14 936H31M14 934H31M18 927V932M27 927V932"/><path fill="#111" d="M16 931h4l-2 3zM25 931h4l-2 3z"/>
<!-- lock etc -->
<path stroke="#111" d="M446 954V951C446 947 452 947 452 951V954"/><rect x="444" y="954" width="10" height="7" fill="#222"/><path stroke="#ccc" d="M445 956H453M445 958H453"/>
<rect x="468.500" y="946.500" width="14" height="17" fill="#ccc" stroke="#222"/><circle cx="475.500" cy="955" r="2" fill="#222"/><path stroke="#222" d="M475.500 947V951M475.500 959V963M469 955H472M479 955H482"/>
<!-- key -->
<circle cx="852" cy="965" r="4.500" stroke="#9a9a9a" stroke-width="2.200"/><path stroke="#9a9a9a" stroke-width="3" d="M857 965H872"/><path stroke="#9a9a9a" stroke-width="2" d="M866 965V969M870 965V969"/>
<!-- teapot disabled -->
<path stroke="#a0a0a0" stroke-width="2" d="M717 972L724 978 721 986"/><circle cx="722" cy="976" r="3" fill="#a0a0a0"/>
<!-- tangent -->
<path stroke="#d02020" stroke-width="1.300" d="M941 985L946 972 950 983 955 974"/><path stroke="#5050b0" stroke-dasharray="1 1" d="M940 974H956M940 986H950"/>
<path fill="#fff" d="M955 987h4v-4z"/>
<!-- playback -->
<g fill="#111">
<path d="M1062 949h2.500v9H1062zM1071 949v9l-6-4.500zM1077 949v9l-6-4.500z"/>
<path d="M1095 949v9l-7-4.500zM1096 949h2.500v9H1096zM1100 949h2.500v9H1100z"/>
<path d="M1133 949h2.500v9H1133zM1137 949h2.500v9H1137zM1140 949l7 4.500-7 4.500z"/>
<path d="M1158 949l6 4.500-6 4.500zM1164 949l6 4.500-6 4.500zM1171 949h2.500v9H1171z"/>
<path d="M1114 949l7 5-7 5z"/>
</g>
<rect x="1110" y="947" width="15" height="15" stroke="#111" stroke-width="2"/>
<path fill="#fff" d="M1127 963h4v-4z"/>
<path stroke="#888" d="M1082.500 945V962M1154.500 945V962M1183.500 945V987"/>
<g fill="#111"><path d="M1063 971h1.500v8H1063zM1066 971l4 4-4 4zM1074 971l-4 4 4 4zM1075 971h1.500v8H1075z"/></g>
<use href="#sp2" transform="translate(1148 968)"/>
<rect x="1166.500" y="968.500" width="11" height="14" fill="#ddd" stroke="#333"/><path stroke="#2a2ab0" d="M1167 970H1177"/><circle cx="1176" cy="978" r="4.500" fill="#ddd" stroke="#c02020"/><path stroke="#c02020" d="M1176 975V978H1178"/>
<!-- viewport nav -->
<circle cx="1193" cy="951" r="5" fill="#dde" stroke="#333"/><path stroke="#3030a0" stroke-width="2.500" d="M1197 955L1202 960"/>
<circle cx="1214" cy="956" r="3.500" fill="#dde" stroke="#333"/><path stroke="#3030a0" stroke-width="2" d="M1216 959L1220 962"/><path stroke="#902020" d="M1214 947.500H1225.500V958H1218M1214 952.500H1225M1219.500 948V958M1214 948V952"/>
<path stroke="#222" d="M1234 949V947H1237M1247 947H1249V949M1234 960V962H1236"/><path stroke="#30308a" d="M1237 950H1246V959H1237ZM1240 947.500V947M1237 950L1240 948H1248V956L1246 959M1246 950L1248 948" />
<path stroke="#30308a" d="M1258 953L1261 950.500H1266V959L1264 961.500H1258ZM1258 953H1264V961.500M1264 953L1266 950.500"/><path stroke="#902020" d="M1262 950V947.500H1271V957.500H1267M1266.500 948V957M1262 952H1271"/>
<path fill="#fff" d="M1255 963l3 0 0-3zM1250 963l3 0 0-3z" opacity=".8"/>
<rect x="1187.500" y="968.500" width="15" height="15" fill="#dde" stroke="#111" stroke-dasharray="2 1"/><circle cx="1194" cy="975" r="3.500" stroke="#333" fill="#eef"/><path stroke="#3030a0" stroke-width="2" d="M1197 978L1201 982"/>
<path fill="#e4e4e4" stroke="#222" d="M1214 984C1211 981 1209 976 1210 975 1212 974 1213 976 1214 977L1213 970C1213 968 1215 968 1215.500 970L1216 969C1216 967 1218 967 1219 969L1219 969C1220 968 1222 968 1222 970L1223 971C1224 970 1225 971 1225 973 1225 977 1224 983 1222 985Z"/>
<circle cx="1241" cy="977" r="5.500" stroke="#30308a"/><path stroke="#222" d="M1241 968V984M1233 982L1249 974"/><path fill="#e0e0e0" stroke="#30308a" d="M1241 968l-2 3h4zM1234 981l3 1-1-3z"/>
<rect x="1259.500" y="968.500" width="10" height="10" fill="#ccd" stroke="#30308a"/><rect x="1263.500" y="973.500" width="9" height="9" fill="#ccd" stroke="#30308a"/><path stroke="#222" d="M1262 971L1268 977"/>
<path fill="#fff" d="M1249 987h4v-4z"/>
<!-- cursor -->
<path fill="#fff" stroke="#000" d="M1037.500 970V985L1041 982 1044 989 1047 988 1044 981 1049 981Z"/>
<!-- bubble -->
<rect x="5" y="967" width="15" height="13" fill="#fff" stroke="#2a48a8"/><rect x="5" y="967" width="15" height="3" fill="#2a6ce0"/>
<rect x="88.500" y="965.500" width="19" height="19" rx="3" fill="#3a6ce0" stroke="#a4bcf4"/>
<rect x="96" y="970" width="6" height="6" stroke="#fff" stroke-width="1.200"/><rect x="93" y="973" width="6" height="6" fill="#3a6ce0" stroke="#fff" stroke-width="1.200"/>
<rect x="112.500" y="965.500" width="19" height="19" rx="3" fill="#3a6ce0" stroke="#a4bcf4"/>
<rect x="117" y="970" width="10" height="10" stroke="#fff" stroke-width="1.500"/>
<rect x="135.500" y="965.500" width="19" height="19" rx="3" fill="#c06a7c" stroke="#d4b4c4"/>
<path stroke="#fff" stroke-width="2.500" d="M140 970L150 980M150 970L140 980"/>
<!-- title -->
<rect x="3" y="4" width="15" height="16" rx="2" fill="#3cb0a8"/><text x="6" y="17" font-size="13" font-weight="bold" fill="#fff" font-family="Liberation Sans">S</text>
<rect x="1215" y="15" width="7" height="3" fill="#fff"/>
<rect x="1242" y="7" width="8" height="8" stroke="#fff"/><rect x="1239" y="11" width="7" height="7" fill="#2a5ee0" stroke="#fff"/>
<path stroke="#fff" stroke-width="2.200" d="M1263 8L1273 18M1273 8L1263 18"/>
</svg>
</body></html>
